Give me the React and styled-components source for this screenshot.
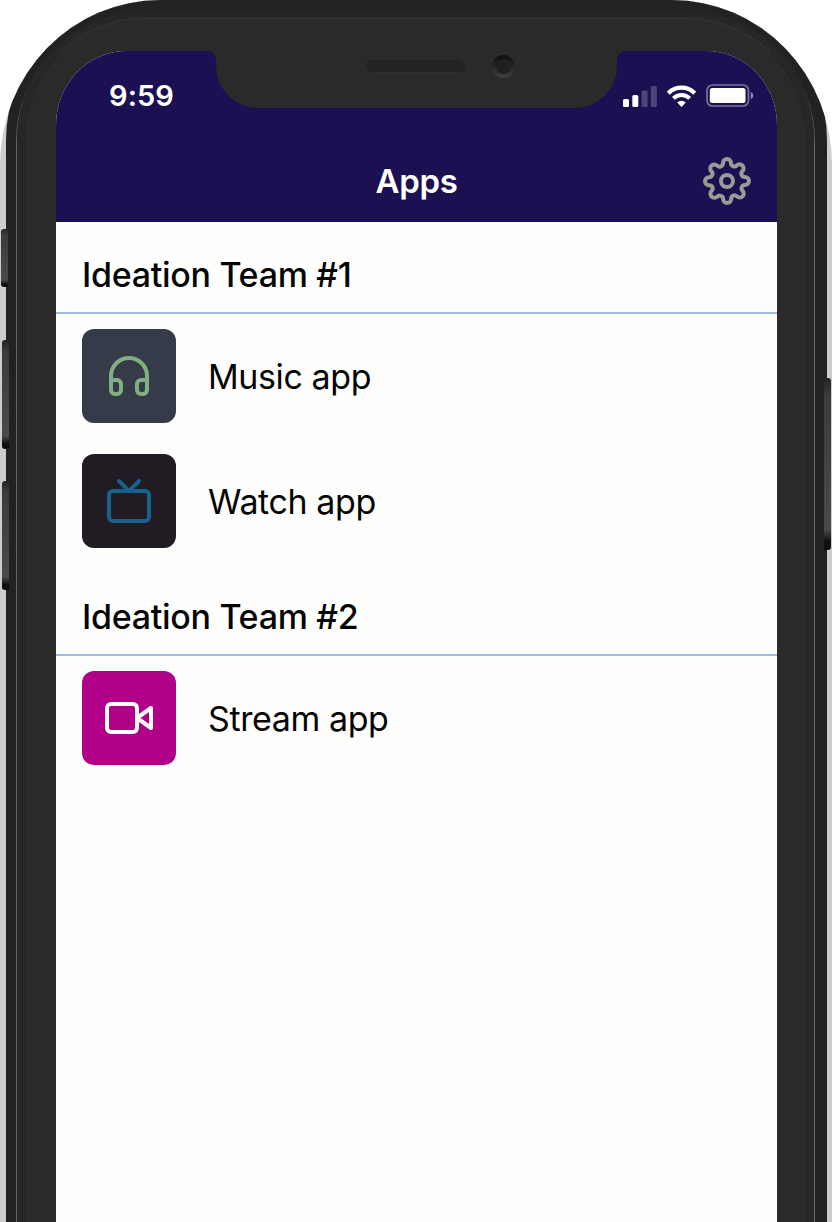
import React from "react";
import styled, { createGlobalStyle } from "styled-components";

const GlobalStyle = createGlobalStyle`
  *, *::before, *::after { box-sizing: border-box; }
  body { margin: 0; background: #fff; font-family: Inter, "Liberation Sans", sans-serif; }
  h1, h2, p { margin: 0; }
`;

const Shadow = styled.div`
  position: relative;
  width: 832px;
  height: 1222px;
  overflow: hidden;
  padding: 0 5px 0 6px;
  border-radius: 160px 160px 0 0 / 165px 165px 0 0;
  background: #cdcdcd;
`;

const Device = styled.div`
  position: relative;
  height: 100%;
  padding: 13px 12px 0 10px;
  border-radius: 138px 138px 0 0 / 140px 140px 0 0;
  background: #222;
`;

const Rim = styled.div`
  height: 100%;
  padding: 4px 7px 0;
  border-radius: 128px 128px 0 0;
  border: 1px solid #666;
  border-top-color: #333;
  border-bottom: 0;
`;

const Bezel = styled.div`
  height: 100%;
  padding: 32px 31px 0;
  border-radius: 120px 120px 0 0;
  border: 1px solid #242424;
  border-top-color: #363636;
  border-bottom: 0;
  background: #2a2a2a;
  box-shadow: 0 0 0 7px #272727;
`;

const Screen = styled.main`
  position: relative;
  width: 721px;
  height: 100%;
  overflow: hidden;
  border-radius: 70px 70px 0 0 / 74px 74px 0 0;
  background: #fefefd;
`;

const SideButton = styled.div`
  position: absolute;
  z-index: 1;
  top: ${(p) => p.$top}px;
  ${(p) => (p.$right ? "right: 1px" : `left: ${p.$left}px`)};
  width: 7px;
  height: ${(p) => p.$height}px;
  border-radius: ${(p) => (p.$right ? "1px 3px 3px 1px" : "3px 1px 1px 3px")};
  background: linear-gradient(#242424, #3b3b3b 10%, #454545 60%, #4a4a4a 88%, #111 95%, #0b0b0b);
`;

const Notch = styled.div`
  position: absolute;
  z-index: 1;
  top: 0;
  left: 160px;
  width: 401px;
  height: 57px;
  border-radius: 0 0 42px 42px;
  background: #2a2a2a;

  &::before, &::after {
    content: "";
    position: absolute;
    top: 0;
    width: 8px;
    height: 8px;
  }
  &::before { left: -8px; background: radial-gradient(circle at 0 100%, transparent 7.5px, #2a2a2a 8px); }
  &::after { right: -8px; background: radial-gradient(circle at 100% 100%, transparent 7.5px, #2a2a2a 8px); }
`;

const Speaker = styled.div`
  position: absolute;
  top: 9px;
  left: 150px;
  width: 99px;
  height: 13px;
  border-radius: 7px;
  background: #222;
  border-bottom: 1px solid #303030;
`;

const Camera = styled.div`
  position: absolute;
  top: 4px;
  left: 276px;
  width: 23px;
  height: 23px;
  padding: 4px;
  border-radius: 50%;
  background: linear-gradient(#0e0e0e, #252525 50%, #414141);

  &::before {
    content: "";
    display: block;
    width: 15px;
    height: 15px;
    border-radius: 50%;
    background: #202020;
  }
`;

const Header = styled.header`
  height: 171px;
  background: #1b1152;
  color: #fff;
`;

const StatusBar = styled.div`
  display: flex;
  justify-content: space-between;
  align-items: center;
  height: 88px;
  padding: 1px 23px 0 53px;
`;

const Clock = styled.span`
  font-size: 29px;
  font-weight: 600;
  letter-spacing: 0.1px;
`;

const StatusIcons = styled.div`
  display: flex;
  align-items: center;
  gap: 10px;
`;

const TitleBar = styled.div`
  display: grid;
  grid-template-columns: 1fr auto 1fr;
  align-items: center;
  height: 83px;
  padding: 0 26px;
`;

const Title = styled.h1`
  grid-column: 2;
  font-size: 33px;
  font-weight: 600;
  letter-spacing: -0.3px;
`;

const SettingsButton = styled.button`
  justify-self: end;
  display: flex;
  padding: 0;
  border: 0;
  background: none;
  color: #9b9a96;
`;

const TeamHeading = styled.h2`
  height: 92px;
  padding: 32px 26px 0;
  border-bottom: 2px solid #a3b9e2;
  font-size: 34px;
  line-height: 42px;
  font-weight: 500;
  letter-spacing: -0.3px;
  color: #050505;
`;

const AppList = styled.div`
  display: flex;
  flex-direction: column;
  gap: 31px;
  padding: 15px 26px 16px;
`;

const AppRow = styled.div`
  display: flex;
  align-items: center;
  gap: 32px;
  height: 94px;
`;

const Tile = styled.div`
  display: grid;
  place-items: center;
  width: 94px;
  height: 94px;
  border-radius: 12px;
  background: ${(p) => p.$background};
  color: ${(p) => p.$color};
`;

const AppName = styled.p`
  font-size: 34px;
  font-weight: 400;
  letter-spacing: ${(p) => p.$spacing ?? -0.4}px;
  color: #050505;
`;

const Icon = ({ children }) => (
  <svg width="48" height="48" viewBox="0 0 24 24" fill="none" stroke="currentColor" strokeWidth="2" strokeLinecap="round" strokeLinejoin="round">
    {children}
  </svg>
);

const icons = {
  headphones: (
    <>
      <path d="M3 18v-6a9 9 0 0 1 18 0v6" />
      <path d="M21 19a2 2 0 0 1-2 2h-1a2 2 0 0 1-2-2v-3a2 2 0 0 1 2-2h3zM3 19a2 2 0 0 0 2 2h1a2 2 0 0 0 2-2v-3a2 2 0 0 0-2-2H3z" />
    </>
  ),
  tv: (
    <>
      <rect x="2" y="7" width="20" height="15" rx="2" />
      <path d="M17 2l-5 5-5-5" />
    </>
  ),
  video: (
    <>
      <path d="M23 7l-7 5 7 5z" />
      <rect x="1" y="5" width="15" height="14" rx="2" />
    </>
  ),
  settings: (
    <>
      <circle cx="12" cy="12" r="3" />
      <path d="M19.4 15a1.65 1.65 0 0 0 .33 1.82l.06.06a2 2 0 0 1 0 2.83 2 2 0 0 1-2.83 0l-.06-.06a1.65 1.65 0 0 0-1.82-.33 1.65 1.65 0 0 0-1 1.51V21a2 2 0 0 1-2 2 2 2 0 0 1-2-2v-.09A1.65 1.65 0 0 0 9 19.4a1.65 1.65 0 0 0-1.82.33l-.06.06a2 2 0 0 1-2.83 0 2 2 0 0 1 0-2.83l.06-.06a1.65 1.65 0 0 0 .33-1.82 1.65 1.65 0 0 0-1.51-1H3a2 2 0 0 1-2-2 2 2 0 0 1 2-2h.09A1.65 1.65 0 0 0 4.6 9a1.65 1.65 0 0 0-.33-1.82l-.06-.06a2 2 0 0 1 0-2.83 2 2 0 0 1 2.83 0l.06.06a1.65 1.65 0 0 0 1.82.33H9a1.65 1.65 0 0 0 1-1.51V3a2 2 0 0 1 2-2 2 2 0 0 1 2 2v.09a1.65 1.65 0 0 0 1 1.51 1.65 1.65 0 0 0 1.82-.33l.06-.06a2 2 0 0 1 2.83 0 2 2 0 0 1 0 2.83l-.06.06a1.65 1.65 0 0 0-.33 1.82V9a1.65 1.65 0 0 0 1.51 1H21a2 2 0 0 1 2 2 2 2 0 0 1-2 2h-.09a1.65 1.65 0 0 0-1.51 1z" />
    </>
  ),
};

const Signal = () => (
  <svg width="34" height="22" viewBox="0 0 34 22" fill="#fff">
    <rect x="0" y="14" width="6" height="8" rx="1.5" />
    <rect x="9.3" y="10" width="6" height="12" rx="1.5" />
    <rect x="18.6" y="5.5" width="6" height="16.5" rx="1.5" opacity=".22" />
    <rect x="27.8" y="1" width="6" height="21" rx="1.5" opacity=".22" />
  </svg>
);

const Wifi = () => (
  <svg width="29" height="22" viewBox="0 0 29 22" fill="none" stroke="#fff">
    <path d="M1.3 8.2a18.6 18.6 0 0 1 26.4 0" strokeWidth="4.2" />
    <path d="M6.4 13.3a11.4 11.4 0 0 1 16.2 0" strokeWidth="4" />
    <path d="M14.5 22l-4.3-4.4a6.2 6.2 0 0 1 8.6 0z" fill="#fff" stroke="none" />
  </svg>
);

const Battery = () => (
  <svg width="48" height="23" viewBox="0 0 48 23">
    <rect x="1" y="1" width="41.5" height="21" rx="5.5" fill="none" stroke="#fff" strokeWidth="1.7" opacity=".42" />
    <rect x="3.8" y="4" width="35.7" height="15" rx="2.5" fill="#fff" />
    <path d="M44.8 7.8c3.2 1.3 3.2 6.1 0 7.4z" fill="#fff" opacity=".5" />
  </svg>
);

const teams = [
  {
    name: "Ideation Team #1",
    apps: [
      { name: "Music app", icon: "headphones", background: "#353b48", color: "#80af81" },
      { name: "Watch app", icon: "tv", background: "#211b24", color: "#17618a" },
    ],
  },
  {
    name: "Ideation Team #2",
    apps: [{ name: "Stream app", icon: "video", background: "#b10088", color: "#fff" }],
  },
];

export default function App() {
  return (
    <>
      <GlobalStyle />
      <Shadow>
        <SideButton $top={229} $left={1} $height={58} />
        <SideButton $top={340} $left={2} $height={109} />
        <SideButton $top={481} $left={2} $height={109} />
        <SideButton $top={378} $right $height={172} />
        <Device>
          <Rim>
            <Bezel>
              <Screen>
                <Notch>
                  <Speaker />
                  <Camera />
                </Notch>
                <Header>
                  <StatusBar>
                    <Clock>9:59</Clock>
                    <StatusIcons>
                      <Signal />
                      <Wifi />
                      <Battery />
                    </StatusIcons>
                  </StatusBar>
                  <TitleBar>
                    <Title>Apps</Title>
                    <SettingsButton aria-label="Settings">
                      <Icon>{icons.settings}</Icon>
                    </SettingsButton>
                  </TitleBar>
                </Header>
                {teams.map((team) => (
                  <section key={team.name}>
                    <TeamHeading>{team.name}</TeamHeading>
                    <AppList>
                      {team.apps.map((app) => (
                        <AppRow key={app.name}>
                          <Tile $background={app.background} $color={app.color}>
                            <Icon>{icons[app.icon]}</Icon>
                          </Tile>
                          <AppName>{app.name}</AppName>
                        </AppRow>
                      ))}
                    </AppList>
                  </section>
                ))}
              </Screen>
            </Bezel>
          </Rim>
        </Device>
      </Shadow>
    </>
  );
}
